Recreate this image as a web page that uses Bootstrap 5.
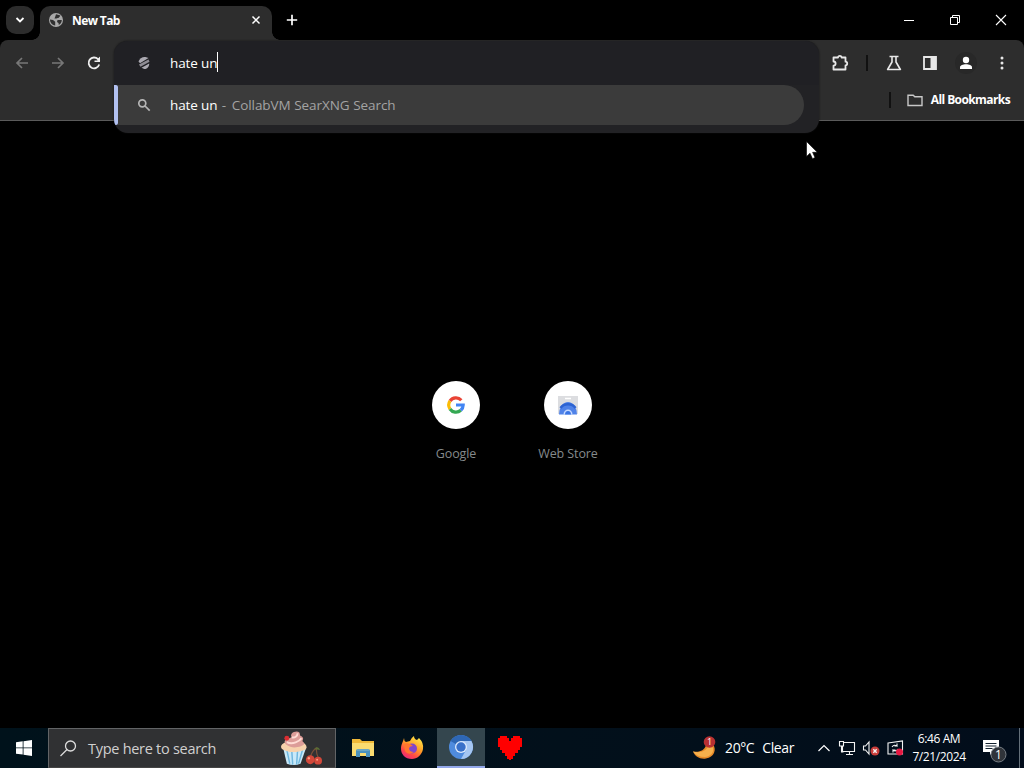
<!DOCTYPE html>
<html lang="en">
<head>
  <meta charset="UTF-8">
  <meta name="viewport" content="width=device-width, initial-scale=1.0">
  <title>New Tab</title>
  <link href="https://cdn.jsdelivr.net/npm/bootstrap@5.3.0/dist/css/bootstrap.min.css" rel="stylesheet">
  <style>
    body { width: 1024px; height: 768px; overflow: hidden; background: #000; color: #fff; font-family: "Open Sans", "Noto Sans", sans-serif; font-size: 13px; line-height: 18px; }
    svg { display: block; flex: none; overflow: visible; }
    .px-btn { border: 0; padding: 0; background: transparent; color: inherit; flex: none; display: flex; align-items: center; justify-content: center; }

    /* tab strip */
    .tab-strip { height: 40px; padding-left: 6px; }
    .tab-search { width: 28px; height: 28px; border-radius: 10px; background: #2c2c2c; margin-top: 6px; }
    .browser-tab { width: 232px; height: 34px; margin: 6px 0 0 6px; padding: 0 10px 6px 8px; border-radius: 10px 10px 0 0; background: #2d2d2d; }
    .browser-tab::before, .browser-tab::after { content: ""; position: absolute; bottom: 0; width: 8px; height: 8px; }
    .browser-tab::before { left: -8px; background: radial-gradient(circle at 0 0, transparent 7.5px, #2d2d2d 8px); }
    .browser-tab::after { right: -8px; background: radial-gradient(circle at 100% 0, transparent 7.5px, #2d2d2d 8px); }
    .tab-title { font-size: 12px; font-weight: 700; letter-spacing: -.6px; margin: 2px 0 0 8px; }
    .new-tab { width: 40px; height: 40px; }
    .win-btn { width: 46px; height: 40px; }

    /* toolbar */
    .browser-bar { height: 81px; background: #2d2d2d; border-bottom: 1px solid #5a5a5a; border-radius: 8px 8px 0 0; }
    .bar-row { height: 45px; padding: 0 4px; }
    .tool-btn { width: 36px; height: 36px; }
    .bar-divider { width: 2px; height: 16px; background: #111; }
    .bookmark-row { height: 30px; padding-right: 14px; font-size: 12px; font-weight: 700; letter-spacing: -.6px; }
    .omnibox { left: 114px; top: 1px; width: 705px; height: 92px; border-radius: 14px; background: #222225; box-shadow: 0 0 2px #111; z-index: 2; overflow: hidden; }
    .omni-input { height: 44px; padding-left: 22px; background: #202024; }
    .omni-text { margin-left: 18px; font-size: 13.5px; letter-spacing: -.12px; }
    .caret { width: 1px; height: 20px; margin-bottom: 2px; background: #fff; }
    .omni-result { height: 40px; width: 686px; margin-left: 4px; padding-left: 18px; border-radius: 0 20px 20px 0; background: #3b3b3b; }
    .omni-mark { left: 0; top: 44px; width: 4px; height: 40px; border-radius: 0 2px 2px 0; background: #b1c0f0; }
    .hint { color: #a3a3a3; letter-spacing: -.08px; word-spacing: .3px; }
    .dash { margin: 0 2px 0 1px; }

    /* new tab page */
    .ntp { height: 607px; padding-top: 260px; }
    .shortcut { width: 112px; color: #858a8c; font-size: 12.5px; letter-spacing: -.1px; }
    .shortcut-icon { width: 48px; height: 48px; margin-bottom: 16px; }
    .pointer { left: 806px; top: 141px; z-index: 3; }

    /* taskbar */
    .task-bar { height: 40px; background: linear-gradient(90deg, #00121b, #02101b 55%, #020d1b); }
    .start-btn { width: 48px; height: 40px; }
    .task-search { width: 288px; height: 40px; padding: 0 12px 0 11px; background: #303133; border: 1px solid #626466; border-bottom-color: #444; color: #d0d0d0; font-size: 14.5px; letter-spacing: -.28px; }
    .search-hint { margin: 2px 0 0 11px; }
    .task-apps { margin-left: 3px; }
    .task-app { width: 48px; height: 40px; margin-right: 1px; }
    .task-app.current { background: #34464e; border-bottom: 2px solid #93a8ea; }
    .weather { font-size: 14px; letter-spacing: -.4px; }
    .tray-gap { margin-right: 7px; }
    .clock { width: 66px; margin: 0 11px 0 2px; font-size: 12px; line-height: 18px; letter-spacing: -.4px; }
    .notices { margin-right: 12px; }
    .show-desktop { width: 5px; height: 40px; border-left: 1px solid #65707a; }
  </style>
</head>
<body>
  <header class="tab-strip d-flex align-items-start">
    <button class="px-btn tab-search" aria-label="Search tabs">
      <svg width="10" height="6" fill="none" stroke="#fff" stroke-width="1.8"><path d="M1.5 1 5 4.5 8.5 1"/></svg>
    </button>
    <div class="browser-tab position-relative d-flex align-items-center">
      <svg width="16" height="16" viewBox="0 0 16 16"><circle cx="8" cy="8" r="7" fill="#a9a9a9"/><path d="M2 7.500 5 8l2.200 1.700v3.800C4 13 2 10.500 2 7.500ZM8 2.200l4.500 1.300-1.700 2.200-2.500.8H6.500l.8-2ZM9.500 8h4.300c0 2.300-1.200 4-3 5l-.3-2-1.500-1Z" fill="#303030"/></svg>
      <span class="tab-title">New Tab</span>
      <button class="px-btn ms-auto" aria-label="Close tab"><svg width="12" height="12" stroke="#fff" stroke-width="1.500"><path d="m2.500 2.500 7 7m0-7-7 7"/></svg></button>
    </div>
    <button class="px-btn new-tab" aria-label="New tab"><svg width="12" height="12" stroke="#fff" stroke-width="1.700"><path d="M6 .8v10.400M.8 6h10.400"/></svg></button>
    <div class="d-flex ms-auto">
      <button class="px-btn win-btn" aria-label="Minimize"><svg width="10" height="10" stroke="#fff"><path d="M0 5.500h10"/></svg></button>
      <button class="px-btn win-btn" aria-label="Restore"><svg width="10" height="10" fill="none" stroke="#fff"><path d="M.5 2.500h7v7h-7ZM2.500 2.500v-2h7v7h-2"/></svg></button>
      <button class="px-btn win-btn" aria-label="Close"><svg width="10" height="10" stroke="#fff" stroke-width="1.100"><path d="m0 0 10 10M10 0 0 10"/></svg></button>
    </div>
  </header>

  <nav class="browser-bar position-relative">
    <div class="bar-row d-flex align-items-center">
      <button class="px-btn tool-btn" aria-label="Back"><svg width="14" height="14" fill="none" stroke="#777" stroke-width="1.700"><path d="M13 7H2M7 2 2 7l5 5"/></svg></button>
      <button class="px-btn tool-btn" aria-label="Forward"><svg width="14" height="14" fill="none" stroke="#777" stroke-width="1.700"><path d="M1 7h11M7 2l5 5-5 5"/></svg></button>
      <button class="px-btn tool-btn" aria-label="Reload"><svg width="14" height="14" fill="none" stroke="#eee" stroke-width="1.800"><path d="M12.200 8.500A5.400 5.400 0 1 1 11 3.200L12.500 5"/><path d="M13 0v6H7.500V4.500h3V3L13 .5Z" fill="#eee" stroke="none"/></svg></button>
      <div class="d-flex align-items-center ms-auto">
        <button class="px-btn tool-btn" aria-label="Extensions"><svg width="16" height="18" fill="none" stroke="#e8e8e8" stroke-width="1.800" stroke-linejoin="round"><path d="M1.500 3.500H6a1.800 1.600 0 0 1 3.600 0h3.900v4.200a1.700 1.800 0 0 1 0 3.600v4.200h-12v-3.800a2.100 2.100 0 0 0 0-4.200Z"/></svg></button>
        <span class="bar-divider mx-2"></span>
        <button class="px-btn tool-btn" aria-label="Labs"><svg width="16" height="16" fill="none" stroke="#e8e8e8" stroke-width="1.600" stroke-linejoin="round"><path d="M3.500 1.500h9M6 2v5L1.600 14.500h12.800L10 7V2"/></svg></button>
        <button class="px-btn tool-btn" aria-label="Side panel"><svg width="16" height="16"><path d="M2 2h12v12H2Z" fill="none" stroke="#e8e8e8" stroke-width="1.800"/><path d="M8.500 2H14v12H8.500Z" fill="#e8e8e8"/></svg></button>
        <button class="px-btn tool-btn" aria-label="Profile"><svg width="24" height="24"><circle cx="12" cy="12" r="11" fill="#282828"/><circle cx="12" cy="9" r="3.200" fill="#fff"/><path d="M6 18v-1.800c0-2 3-3 6-3s6 1 6 3V18Z" fill="#fff"/></svg></button>
        <button class="px-btn tool-btn" aria-label="Menu"><svg width="4" height="14" fill="#e8e8e8"><circle cx="2" cy="2" r="1.500"/><circle cx="2" cy="7" r="1.500"/><circle cx="2" cy="12" r="1.500"/></svg></button>
      </div>
    </div>
    <div class="bookmark-row d-flex align-items-center justify-content-end">
      <span class="bar-divider"></span>
      <svg class="ms-3 me-2" width="16" height="13" fill="none" stroke="#c8c8c8" stroke-width="1.400"><path d="M1 11.500V1.200h5.200l1.600 1.600H15v8.700Z"/></svg>
      <span>All Bookmarks</span>
    </div>

    <!-- address bar with its open suggestion list -->
    <div class="omnibox position-absolute">
      <div class="omni-input d-flex align-items-center">
        <svg width="16" height="16" viewBox="0 0 16 16" fill="#aaa8b0"><path d="M2.500 6.500c1-3 4-5 7-4.500l3 1-8.500 5.200Z"/><path d="m3 9.500 9.500-5 1 2.200-9 5Z" fill="#8e8c94"/><path d="m5.500 12.700 7.700-4.200c.2 3-2 5.800-5 5.500Z"/></svg>
        <span class="omni-text">hate un</span><span class="caret"></span>
      </div>
      <div class="omni-result d-flex align-items-center">
        <svg width="16" height="16" fill="none" stroke="#b5b5b5" stroke-width="1.700"><circle cx="6.300" cy="6.300" r="3.500"/><path d="m9 9 4.700 4.700"/></svg>
        <span class="omni-text">hate un <span class="hint"><span class="dash">-</span> CollabVM SearXNG Search</span></span>
      </div>
      <span class="omni-mark position-absolute"></span>
    </div>
  </nav>

  <main class="ntp d-flex justify-content-center align-items-start">
    <div class="shortcut d-flex flex-column align-items-center">
      <span class="shortcut-icon rounded-circle bg-white d-flex align-items-center justify-content-center">
        <svg width="18" height="18" fill="none" stroke-width="3.200"><path d="M3 5A7.200 7.200 0 0 1 14.300 4.200" stroke="#e94335"/><path d="M3 13A7.200 7.200 0 0 1 3 5" stroke="#fbbc05"/><path d="M13.800 14.300A7.200 7.200 0 0 1 3 13" stroke="#34a853"/><path d="M9 9h7.200a7.200 7.200 0 0 1-2.400 5.300" stroke="#4285f4"/></svg>
      </span>
      <span>Google</span>
    </div>
    <div class="shortcut d-flex flex-column align-items-center">
      <span class="shortcut-icon rounded-circle bg-white d-flex align-items-center justify-content-center">
        <svg width="22" height="20"><path d="M1 1h20v18H1Z" fill="#dcdde0"/><path d="M8 3.500h6" stroke="#fff" stroke-width="1.500"/><path d="M2 19.500a9 12.500 0 0 1 18 0Z" fill="#4f82e8"/><path d="M3.500 13a8.500 7 0 0 1 15 0" fill="none" stroke="#2d63d2" stroke-width="2.500"/><path d="M6.500 19.500a4.500 5 0 0 1 9 0Z" fill="#c4d8ff"/><path d="M8 19.500a3 3.500 0 0 1 6 0Z" fill="#3974e4"/></svg>
      </span>
      <span>Web Store</span>
    </div>
  </main>

  <footer class="task-bar d-flex align-items-center">
    <button class="px-btn start-btn" aria-label="Start"><svg width="16" height="16" fill="#fff"><path d="M0 2.300 6.700 1.300v6.200H0ZM7.500 1.200 16 0v7.500H7.500ZM0 8.300h6.700v6.300L0 13.700ZM7.500 8.300H16V16l-8.500-1.200Z"/></svg></button>
    <div class="task-search d-flex align-items-center">
      <svg width="17" height="17" fill="none" stroke="#ddd" stroke-width="1.300"><circle cx="10.500" cy="6" r="5"/><path d="M7 9.500.5 16"/></svg>
      <span class="search-hint">Type here to search</span>
      <svg class="ms-auto" width="43" height="36" viewBox="0 0 44 36">
        <path d="M3 17 7 34q7 3 14 0l6-17Z" fill="#c9e9f8"/>
        <path d="m7 20 3 14M12 20l1 15M18 20l-1 15M23 20l-4 14" stroke="#70b7de" stroke-width="1.500"/>
        <path d="M2 19C-1 15 4 12 7 12l15 0c5 1 7 6 3 8-8 3-17 3-23-1Z" fill="#f7d2ac"/>
        <path d="M7 15C1 10 9 8 12 7c-2-3 1-6 5-6 5 0 2 4 5 5 3 2 1 4 1 5 4 3 0 5-5 6-4 1-8 0-11-2Z" fill="#dd9d98"/>
        <path d="M7 12c6 3 13-1 15-4M12 7c3 1 6-1 6-4" fill="none" stroke="#ffdcd4" stroke-width="2"/>
        <circle cx="7" cy="8" r="2.500" fill="#d92e32"/>
        <path d="M31 28q1-6 6-10 0 6 3 12" fill="none" stroke="#795039" stroke-width="1.200"/><path d="M35 19q4-4 6 1Z" fill="#5a6d35"/>
        <circle cx="31" cy="30" r="4.500" fill="#d3483a"/><circle cx="39" cy="31" r="4" fill="#d3483a"/><circle cx="29.500" cy="28.500" r="1.200" fill="#ff9b82"/><circle cx="38" cy="30" r="1" fill="#ff9b82"/>
      </svg>
    </div>
    <div class="task-apps d-flex">
      <button class="px-btn task-app" aria-label="File Explorer"><svg width="22" height="18"><path d="M0 0h8l2 2h12v15H0Z" fill="#f0b938"/><path d="M0 4h22v13H0Z" fill="#fadb70"/><path d="M4 18v-6q0-2 2-2h10q2 0 2 2v6h-4v-4H8v4Z" fill="#4a91bd"/><path d="M5 11h12" stroke="#8ab9c8"/></svg></button>
      <button class="px-btn task-app" aria-label="Firefox">
        <svg width="24" height="24">
          <defs><linearGradient id="foxFire" x1=".8" y1="0" x2=".2" y2="1"><stop stop-color="#fff04b"/><stop offset=".45" stop-color="#ff9a25"/><stop offset=".75" stop-color="#ff4548"/><stop offset="1" stop-color="#e62882"/></linearGradient></defs>
          <path d="M4 2q0 3 2 4l4-1q1-3 4-5 0 3 3 4l2-2q5 5 4 11c-1 6-6 10-11 10C5 23 1 18 1 13 1 8 3 6 4 2Z" fill="url(#foxFire)"/>
          <circle cx="12" cy="12.500" r="5" fill="#8145cb"/><path d="M4 8q5-2 9 2-3 0-4 2 0 4 5 4-6 4-9-1Z" fill="#ff752e"/>
        </svg>
      </button>
      <button class="px-btn task-app current" aria-label="Chromium"><svg width="24" height="24"><circle cx="12" cy="12" r="12" fill="#4f8bdd"/><path d="M12 12 1.600 6A12 12 0 0 1 22.400 6Z" fill="#2e67b5"/><path d="M12 6h10.400A12 12 0 0 1 12 24l5-9Z" fill="#a5c6f2"/><circle cx="12" cy="12" r="6" fill="#dce9fc"/><circle cx="12" cy="12" r="4.700" fill="#3870c9"/></svg></button>
      <button class="px-btn task-app" aria-label="Heart"><svg width="24" height="24" fill="#f00" shape-rendering="crispEdges"><path d="M2 0h7v2h2v3h2V2h2V0h7v2h2v9h-2v3h-2v3h-3v3h-2v3h-2v1h-2v-1H9v-3H7v-3H4v-3H2v-3H0V2h2Z"/></svg></button>
    </div>
    <div class="d-flex align-items-center ms-auto">
      <svg width="25" height="24"><path d="M1 15.500c7 1 11-1 13-6l7-1c4 5 1 13-7 14-6 1-11-2-13-7Z" fill="#e78a28"/><path d="M1 15.500c8 2 13-1 15-5l5 1c1 6-3 9-8 9.500Q5 21 1 15.500Z" fill="#f6b04c"/><circle cx="17.500" cy="6" r="5.800" fill="#b83032"/><text x="17.500" y="9.200" text-anchor="middle" font-size="9" fill="#fff">1</text></svg>
      <span class="weather ms-1 ps-1">20°C</span><span class="weather ms-2">Clear</span>
      <svg class="ms-4 me-2" width="12" height="8" fill="none" stroke="#fff" stroke-width="1.200"><path d="m.5 7 5.500-5.500L11.500 7"/></svg>
      <svg class="tray-gap" width="18" height="16" fill="none" stroke="#f4f4f4" stroke-width="1.100"><path d="M4.500 2.500h12v9h-12ZM8 14.500h7M11.500 11.500v3M3.500 6v6h2"/><path d="M1.500 1.500h4V6h-4Z" fill="#020e1b"/></svg>
      <svg class="tray-gap" width="17" height="16" fill="none" stroke="#f4f4f4" stroke-width="1.100"><path d="M.5 6h2L6 2v12l-3.500-4h-2Z"/><circle cx="12" cy="11" r="4.500" fill="#c93d3a" stroke="none"/><path d="m10.300 9.300 3.400 3.400m0-3.400-3.400 3.400" stroke-width="1.400"/></svg>
      <svg width="17" height="16" fill="none" stroke="#f4f4f4" stroke-width="1.100"><path d="m1 3 14.500-2v13H1Z"/><path d="M5 7q2-3 5-1V3.500M10 6H7.500M11 9q-2 3-5 1v2.500M6 10h2.500"/><circle cx="12.500" cy="12" r="3.500" fill="#e81943" stroke="none"/></svg>
      <div class="clock text-center text-nowrap">6:46 AM<br>7/21/2024</div>
      <svg class="notices" width="24" height="24"><path d="M0 4h16v12h-6l-3 3v-3H0Z" fill="#fff"/><path d="M2.500 7.500h11M2.500 10h11M2.500 12.500h7" stroke="#142330" stroke-width="1"/><circle cx="15.500" cy="18.500" r="7.500" fill="#30343a" stroke="#777e85"/><text x="15.500" y="23" text-anchor="middle" font-size="12" fill="#fff">1</text></svg>
      <span class="show-desktop"></span>
    </div>
  </footer>

  <svg class="pointer position-absolute" width="12" height="18"><path d="M.5.500v15l3.500-3.300 2.500 5.500 2.500-1.100-2.400-5.300h4.700Z" fill="#fff" stroke="#000" stroke-width=".6"/></svg>

  <script src="https://cdn.jsdelivr.net/npm/bootstrap@5.3.0/dist/js/bootstrap.bundle.min.js"></script>
</body>
</html>
